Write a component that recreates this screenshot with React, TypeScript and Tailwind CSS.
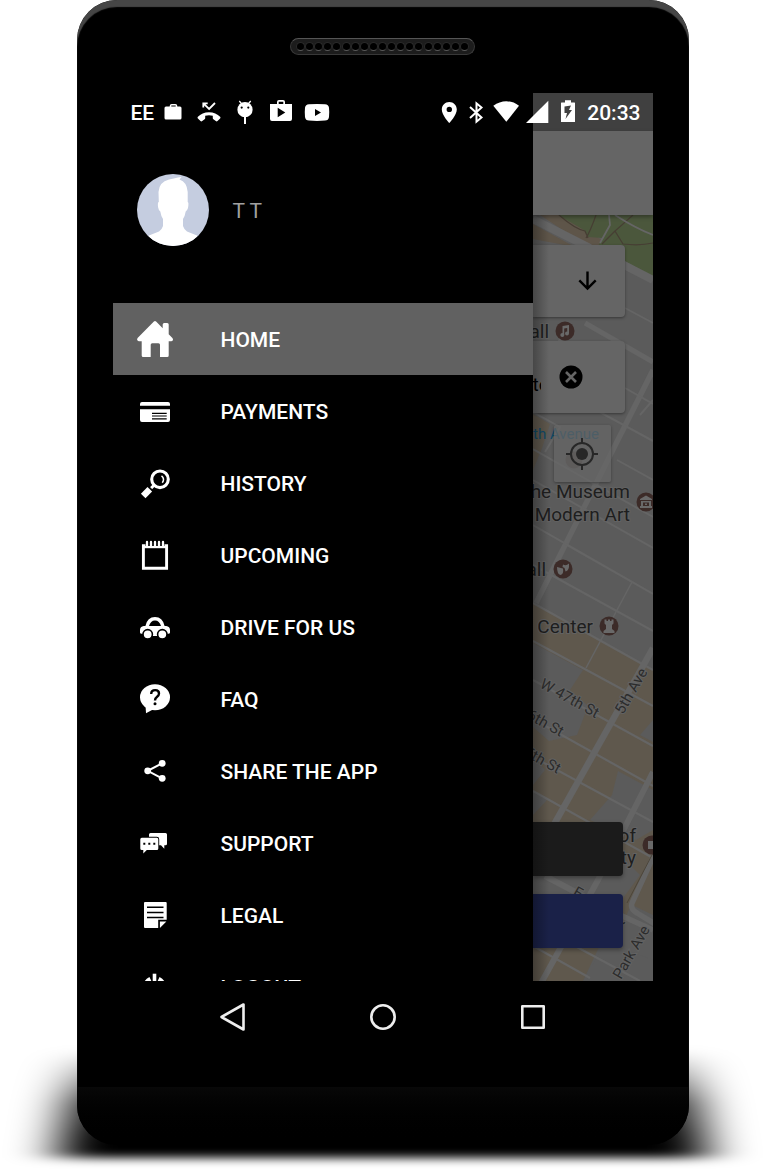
import React from "react";

type MenuItem = { label: string; icon: React.ReactNode; active?: boolean };

const HomeIcon = () => (
  <path
    fill="#fff"
    d="M16.9.6Q18-.4 19.1.6L25.700 7.200V3.500Q25.700 2 27.200 2h3q1.500 0 1.500 1.500v9.700l3.700 3.700Q37 19.600 34.400 20.300h-2.700v14.200q0 1.500-1.500 1.500H23V23.800q0-1.500-1.500-1.500h-6.300q-1.500 0-1.500 1.500V36H6.200q-1.500 0-1.500-1.500V20.300H1.800Q-.9 19.600.6 16.900Z"
  />
);
const CardIcon = () => (
  <g>
    <path fill="#fff" d="M5 9h26q2 0 2 2v1.800H3V11q0-2 2-2ZM3 16.300h30V27q0 2-2 2H5q-2 0-2-2Z" />
    <path stroke="#000" strokeWidth="1.200" d="M15 20.300h14.700M15 23h14.700M15 25.800h14.700" />
  </g>
);
const SearchIcon = () => (
  <g fill="none" stroke="#fff">
    <circle cx="23" cy="14.300" r="8.300" strokeWidth="3.100" />
    <path strokeWidth="1.500" d="M24.500 10.800q3.600 3 .8 7" />
    <path strokeWidth="3" d="m17 20.300-3 3" />
    <path strokeWidth="6.400" d="M12.800 24.200 6.200 31" />
    <path stroke="#000" strokeWidth=".8" d="m11.600 21.200 4.600 4.600" />
  </g>
);
const PadIcon = () => (
  <g>
    <path fill="none" stroke="#fff" strokeWidth="2.900" d="M6.400 8.800h23.200v22.400H6.400Z" />
    <path fill="#000" d="M8.500 5h19v4h-19Z" />
    <path stroke="#fff" strokeWidth="1.200" d="M7 10.600h22" />
    <path stroke="#fff" strokeWidth="2.300" strokeLinecap="round" d="M10 5v3.900M14 5v3.900M18 5v3.900M22 5v3.900M26 5v3.900" />
  </g>
);
const CarIcon = () => (
  <g>
    <path
      fill="#fff"
      fillRule="evenodd"
      d="M8.400 17Q10.400 8 18 8t9.600 9h1.600Q33 17.600 33 21v2.500q0 1.200-1.800 1.200H29V27H7v-2.300H4.800Q3 24.700 3 23.500V21q0-3.400 3.800-4ZM12 17h12q-1.500-5.600-6-5.600T12 17Z"
    />
    <circle cx="10.700" cy="25.300" r="4.700" fill="#fff" stroke="#000" strokeWidth="1.600" />
    <circle cx="25.300" cy="25.300" r="4.700" fill="#fff" stroke="#000" strokeWidth="1.600" />
    <path fill="#000" d="M3 25h2.600v3H3ZM30.400 25H33v3h-2.600ZM16 27h4v2h-4Z" />
  </g>
);
const FaqIcon = () => (
  <g>
    <ellipse cx="18" cy="16.300" rx="15" ry="13" fill="#fff" />
    <path fill="#fff" d="M8.500 24 9 32.200l7-3.700Z" />
    <path fill="none" stroke="#000" strokeWidth="2.400" d="M14.200 13q0-3.900 4-3.900 3.800 0 3.800 3.400 0 1.800-1.900 3.200Q18 17.200 18 19.600" />
    <circle cx="18" cy="22.800" r="1.500" fill="#000" />
  </g>
);
const ShareIcon = () => (
  <g fill="#fff">
    <path fill="none" stroke="#fff" strokeWidth="2" d="M25 10.300 10.700 17.800 25 25.300" />
    <circle cx="10.700" cy="17.800" r="3.400" />
    <circle cx="25.200" cy="10.300" r="3.400" />
    <circle cx="25.200" cy="25.300" r="3.400" />
  </g>
);
const ChatIcon = () => (
  <g>
    <path fill="#fff" d="M13.500 8h15q1.500 0 1.500 1.500v9.300q0 1.500-1.500 1.500h-1.200v3.400l-3.300-3.400H12V9.500Q12 8 13.500 8Z" />
    <path fill="#fff" stroke="#000" strokeWidth="1.800" paintOrder="stroke" d="M4.800 12.700h15q1.500 0 1.500 1.500v9.300q0 1.500-1.500 1.500H9.800l-3.500 3.600V25H4.800q-1.500 0-1.500-1.500v-9.300q0-1.500 1.500-1.500Z" />
    <path stroke="#000" strokeWidth="2" d="M6.300 18.700h2M11.300 18.700h2M16.300 18.700h2" />
  </g>
);
const PageIcon = () => (
  <g>
    <path fill="#fff" d="M8 5h20.700q1 0 1 1v16.800h-8.500V31H8q-1 0-1-1V6q0-1 1-1ZM22.900 24.500h6.500l-6.500 6.500Z" />
    <path stroke="#000" strokeWidth="1.500" d="M10 10.300h16.500M10 15.500h16.500M10 20.600h16.500" />
  </g>
);
const PowerIcon = () => (
  <g fill="none" stroke="#fff">
    <path strokeWidth="3.600" d="M17.500 4.700V19" />
    <path strokeWidth="4.400" d="M13.400 10a9.400 9.400 0 1 0 8.200 0" />
  </g>
);

const menu: MenuItem[] = [
  { label: "HOME", icon: <HomeIcon />, active: true },
  { label: "PAYMENTS", icon: <CardIcon /> },
  { label: "HISTORY", icon: <SearchIcon /> },
  { label: "UPCOMING", icon: <PadIcon /> },
  { label: "DRIVE FOR US", icon: <CarIcon /> },
  { label: "FAQ", icon: <FaqIcon /> },
  { label: "SHARE THE APP", icon: <ShareIcon /> },
  { label: "SUPPORT", icon: <ChatIcon /> },
  { label: "LEGAL", icon: <PageIcon /> },
  { label: "LOGOUT", icon: <PowerIcon /> },
];

function StatusIcon({ slot, children }: { slot: string; children: React.ReactNode }) {
  return (
    <span className={`flex shrink-0 justify-center ${slot}`}>
      <svg viewBox="0 0 24 24" className="size-6 overflow-visible" fill="#fff" aria-hidden="true">
        {children}
      </svg>
    </span>
  );
}

function StatusBar() {
  return (
    <header className="absolute inset-x-0 top-0 z-20 flex h-[38px] items-center justify-between pr-3 pl-[18px] text-[21px] leading-6 font-medium text-white">
      <div className="flex items-center">
        <span className="w-6 pt-0.5">EE</span>
        <StatusIcon slot="w-9">
          <path fillRule="evenodd" d="M5 6.500h3.700V6q0-2 2-2h3.600q2 0 2 2v.5H19q1.500 0 1.500 1.500v10q0 1.500-1.500 1.500H5Q3.500 19.500 3.500 18V8Q3.500 6.500 5 6.500Zm5.300 0h4.400V5.600h-4.400Z" />
        </StatusIcon>
        <StatusIcon slot="w-9">
          <path d="M12 12.200c-4.500 0-8.500 1.800-11.100 4.600-.5.500-.5 1.200 0 1.700l2.600 2.500c.5.500 1.200.5 1.700 0l2.400-1.700c.4-.3.600-.6.600-1v-2.500c2.500-.7 5.100-.7 7.600 0v2.500c0 .4.200.8.600 1l2.400 1.700c.5.500 1.200.5 1.700 0l2.600-2.500c.5-.5.5-1.200 0-1.700-2.600-2.800-6.600-4.600-11.100-4.600Z" />
          <path fill="none" stroke="#fff" strokeWidth="1.800" d="M6.300 7.500V3.300h4.400M6.600 3.600l5.500 5.400L18 3" />
        </StatusIcon>
        <StatusIcon slot="w-9">
          <path stroke="#fff" strokeWidth="1.300" d="m6.300 1 2.500 3M17.700 1l-2.500 3" />
          <circle cx="12" cy="9.700" r="7.600" />
          <path d="M11 17h2v7h-2Z" />
          <circle cx="8.700" cy="7.600" r="1.100" fill="#000" />
          <circle cx="15.300" cy="7.600" r="1.100" fill="#000" />
        </StatusIcon>
        <StatusIcon slot="w-9">
          <path fillRule="evenodd" d="M1 4h7V2q0-2 2-2h4q2 0 2 2v2h7v15q0 2-2 2H3q-2 0-2-2Zm8.700 0h4.600V1.700H9.700Zm-1 3.700v9.600l7.600-4.700Z" />
        </StatusIcon>
        <StatusIcon slot="w-9">
          <path fillRule="evenodd" d="M4 4.200q8-.6 16 0 3.500 0 4 3.600.5 4.600 0 9.200-.5 3.600-4 3.600-8 .6-16 0-3.500 0-4-3.600-.5-4.600 0-9.200.5-3.600 4-3.600ZM10 9v7l6-3.500Z" />
        </StatusIcon>
      </div>
      <div className="flex items-center">
        <StatusIcon slot="w-6">
          <path fillRule="evenodd" d="M12.300 2c-4.200 0-7.500 3.300-7.500 7.400 0 5.600 7.500 13.600 7.500 13.600s7.500-8 7.500-13.600c0-4.100-3.300-7.400-7.500-7.400Zm0 4.700a2.700 2.700 0 1 1 0 5.400 2.700 2.700 0 0 1 0-5.400Z" />
        </StatusIcon>
        <StatusIcon slot="w-[30px]">
          <path fill="none" stroke="#fff" strokeWidth="2" d="m6 7 11.500 10.500-5 4.200V3.300l5 4.200L6 18" />
        </StatusIcon>
        <StatusIcon slot="w-[30px]">
          <path d="M-.7 5.800Q5.500 1.300 12.300 1.300T25 5.800L12.300 21.800Z" />
        </StatusIcon>
        <StatusIcon slot="w-8">
          <path d="M23.300.7V23H1Z" />
        </StatusIcon>
        <StatusIcon slot="w-[30px]">
          <path fillRule="evenodd" d="M9 .3h6v2.200h3.500q.5 0 .5.500v18.500q0 .5-.5.500h-13q-.5 0-.5-.5V3q0-.500.500-.5H9ZM15 5.500l-6.500 1v6.500h2.500l-1.500 6 6.500-9h-3Z" />
        </StatusIcon>
        <time className="pt-0.5 pl-1">20:33</time>
      </div>
    </header>
  );
}

function MapCanvas() {
  return (
    <svg
      viewBox="533 215 120 766"
      preserveAspectRatio="xMinYMin slice"
      className="absolute inset-0 size-full font-[Roboto,sans-serif]"
      role="img"
      aria-label="Map"
    >
      <rect x="533" y="215" width="120" height="766" fill="#5b5b5b" />
      <g fill="#5e5549">
        <path d="M540 215H562L602 240 596 252Z" />
        <path d="M533 224 575 247 533 239Z" />
      </g>
      <g fill="#5f584d">
        <path d="M533 414 550 424 542 448 533 470Z" />
        <path d="M533 603 653 670V862L640 882 600 981H533V785L545 770 533 757Z" />
      </g>
      <path fill="#4b573c" d="M558 215H653V277L598 246 603 238 588 237 584 230Z" />
      <g fill="#5b5b5b">
        <path d="M533 643 583 670 570 690 588 706 577 735 549 741 533 727Z" />
        <path d="M653 720 640 735 653 742ZM618 771 653 790V830L636 840 590 820 612 795Z" />
        <path d="M533 790 547 800 533 815ZM533 862 625 860 640 875 618 905 605 940 620 981H583L600 945 620 905H533Z" />
        <path d="M606 942 653 960V981H583Z" />
      </g>
      <path fill="#5f584d" d="M653 850V915L632 905Z" />
      <g fill="none" stroke="#463e33" strokeWidth="1.200">
        <path d="M559 215Q575 229 585 231L588 238M596 215Q590 232 586 238M633 215 615 231 623 244Q640 246 653 243M615 231 602 244" />
      </g>
      <g fill="none" stroke="#656565">
        <path strokeWidth="8" d="M533 219 590 248" />
        <path strokeWidth="8" d="M620 263 653 280" />
        <path strokeWidth="1.800" d="M609 215 610 225 600 243M615 215Q635 228 653 235M625 308 653 323" />
        <path strokeWidth="5" d="M585 323 653 362" />
        <path strokeWidth="5.500" d="M653 370 536 603" />
        <path strokeWidth="4" d="M570 323 555 350" />
        <path strokeWidth="2" d="M625 388 653 404M585 404 653 441M617 460 653 480M533 449 653 517M533 480 653 548M533 525 653 594M533 412 560 427 545 452M565 544 653 594M533 565 653 631M653 400 640 415" />
        <path strokeWidth="2.200" d="M533 603 653 670M533 641 653 706M533 680 653 746M533 719 653 786M533 757 653 822M533 791 653 858M533 946 590 978M575 946 640 981" />
        <path strokeWidth="1.500" d="M632 582 586 668" />
        <path strokeWidth="6.500" d="M653 648 533 862" />
        <path strokeWidth="6" d="M653 772 598 880 540 985M545 876 600 905" />
        <path strokeWidth="5.500" d="M660 842 632 903Q630 909 637 913L655 924M620 915 653 930" />
      </g>
      <path fill="none" stroke="#4d463a" strokeWidth="1" d="M653 853 627 903" />
      <g fill="#1e1e1e" stroke="#626262" strokeWidth="2" paintOrder="stroke" fontSize="19">
        <text x="549" y="338" textAnchor="end">all</text>
        <text x="630" y="498" textAnchor="end">he Museum</text>
        <text x="630" y="521" textAnchor="end">Modern Art</text>
        <text x="546" y="576" textAnchor="end">all</text>
        <text x="593" y="633" textAnchor="end">Center</text>
        <text x="636" y="842" textAnchor="end">of</text>
        <text x="636" y="864" textAnchor="end">ty</text>
      </g>
      <text x="533" y="439" fill="#104a68" fontSize="15">th Avenue</text>
      <g fill="#2c2c2c" stroke="#626262" strokeWidth="2" paintOrder="stroke" fontSize="15">
        <text transform="translate(539 687) rotate(29)">W 47th St</text>
        <text transform="translate(526 718) rotate(29)">6th St</text>
        <text transform="translate(523 755) rotate(29)">5th St</text>
        <text transform="translate(623 715) rotate(-60)">5th Ave</text>
        <text transform="translate(621 980) rotate(-60)">Park Ave</text>
        <text transform="translate(572 895) rotate(29)">E</text>
        <text transform="translate(623 926) rotate(-60)">t</text>
      </g>
      <g fill="#3c2b28">
        <circle cx="565" cy="331" r="9.500" />
        <circle cx="574" cy="460" r="8.500" opacity=".5" />
        <circle cx="646" cy="502" r="9.500" />
        <circle cx="563" cy="569" r="9.500" />
        <circle cx="609" cy="626" r="9.500" />
        <circle cx="652" cy="845" r="9.500" />
      </g>
      <g fill="#696969">
        <path d="M562.500 326 569 325V333.500H567.200V328L564.200 328.500V335H562.500Z" />
        <circle cx="562.300" cy="335" r="2" />
        <circle cx="567" cy="333.500" r="2" />
        <path fillRule="evenodd" d="M646 495.500 652 499V500H640V499ZM641 501H651V506H652V508H640V506H641ZM643 502.500V506H649V502.500ZM645 503.500H647V505H645Z" />
        <path d="M557 567 563 568.500Q564 574 560.500 575 557 574 557 567ZM563 564.500Q566 566.500 569 563.500 569.500 571 565.500 571.500L564.500 568 562.500 567Z" />
        <path d="M604.500 619.500H606.500V621H608V619.500H610V621H611.500V619.500H613.500V623.500L612 625V629L614.500 631V633H603.500V631L606 629V625L604.500 623.500Z" />
        <path d="M648 841H653V849H648Z" />
      </g>
    </svg>
  );
}

function RidePane() {
  return (
    <main className="flex min-w-0 flex-1 flex-col">
      <div className="h-[38px] shrink-0 bg-[#404040]" />
      <div className="z-10 h-[84px] shrink-0 bg-[#656565] shadow-[0_2px_4px_rgba(0,0,0,0.35)]" />
      <div className="relative flex flex-1 flex-col overflow-hidden">
        <MapCanvas />
        <div className="relative flex flex-1 flex-col pt-[30px] pb-[33px]">
          <button type="button" aria-label="Expand" className="mr-7 flex h-[72px] shrink-0 items-center justify-end rounded-r-sm bg-[#656565] pr-[26px] shadow-[0_1px_3px_rgba(0,0,0,0.4)]">
            <svg viewBox="0 0 24 24" className="size-6" fill="none" stroke="#000" strokeWidth="2.400" aria-hidden="true">
              <path d="M12.500 2.500v17M4.300 11.300l8.200 8.200 8.200-8.200" />
            </svg>
          </button>
          <div className="mt-6 mr-7 flex h-[72px] shrink-0 items-center justify-between rounded-r-sm bg-[#656565] pr-[42px] shadow-[0_1px_3px_rgba(0,0,0,0.4)]">
            <span className="w-2 overflow-hidden pt-4 text-[19px] leading-6 whitespace-nowrap text-black">te</span>
            <button type="button" aria-label="Clear">
              <svg viewBox="0 0 24 24" className="size-6" aria-hidden="true">
                <circle cx="12" cy="12" r="11.500" fill="#000" />
                <path stroke="#656565" strokeWidth="2.600" d="m7 7 10 10M17 7 7 17" />
              </svg>
            </button>
          </div>
          <button type="button" aria-label="My location" className="mt-3 mr-[42px] flex size-[57px] shrink-0 items-center justify-center self-end rounded-xs bg-[#666666]/70 shadow-[0_1px_3px_rgba(0,0,0,0.35)]">
            <svg viewBox="0 0 32 32" className="size-8" fill="none" stroke="#272727" strokeWidth="2" aria-hidden="true">
              <circle cx="16" cy="16" r="11" />
              <circle cx="16" cy="16" r="6" fill="#272727" stroke="none" />
              <path d="M16 0v5M16 27v5M0 16h5M27 16h5" />
            </svg>
          </button>
          <div className="mt-auto mr-[30px] flex flex-col gap-[18px]">
            <button type="button" aria-label="Ride later" className="h-[54px] rounded-r-sm bg-[#1b1b1b] shadow-[0_2px_4px_rgba(0,0,0,0.35)]" />
            <button type="button" aria-label="Ride now" className="h-[54px] rounded-r-sm bg-[#1a2148] shadow-[0_2px_4px_rgba(0,0,0,0.35)]" />
          </div>
        </div>
        <div className="pointer-events-none absolute inset-y-0 left-0 w-4 bg-linear-to-r from-black/30 to-transparent" />
      </div>
    </main>
  );
}

function Drawer() {
  return (
    <aside className="w-7/9 shrink-0 bg-black">
      <div className="flex items-center gap-6 px-6 pt-[81px] pb-[57px]">
        <svg viewBox="0 0 72 72" className="size-[72px] rounded-full" role="img" aria-label="Profile picture">
          <rect width="72" height="72" fill="#c5cde0" />
          <path
            fill="#fff"
            d="M41 3.500 44.500 3 42.500 5.500Q50 8 50.700 18V28Q52 28 51 34 50 37 48.700 37.500 48 42 46 45V52Q47 55.500 50 57.500L60 61.500 66 72H6L12 61.500 22 57.500Q25 55.500 26 52V45Q24 42 23.300 37.500 21.500 36 21 33 20.500 28 21.800 28L21.500 18Q22 8 32 5.500Q37 4.500 41 3.500Z"
          />
        </svg>
        <span className="pt-0.5 text-[21px] leading-6 text-[#a0a0a0]">T T</span>
      </div>
      <nav>
        {menu.map((item) => (
          <a
            key={item.label}
            href="#"
            className={`flex h-[72px] items-center gap-12 px-6 text-[21px] leading-6 font-medium text-white ${item.active ? "bg-[#616161]" : ""}`}
          >
            <svg viewBox="0 0 36 36" className="size-9 shrink-0" aria-hidden="true">
              {item.icon}
            </svg>
            <span className="pt-0.5">{item.label}</span>
          </a>
        ))}
      </nav>
    </aside>
  );
}

function SystemNav() {
  return (
    <div className="flex h-[72px] shrink-0 items-center justify-center">
      <button type="button" aria-label="Back" className="flex w-[150px] justify-center">
        <svg viewBox="0 0 28 28" className="size-7" fill="none" stroke="#eee" strokeWidth="2.600" strokeLinejoin="round">
          <path d="M24.500 1.500V26.500L2.500 14Z" />
        </svg>
      </button>
      <button type="button" aria-label="Home" className="flex w-[150px] justify-center">
        <svg viewBox="0 0 28 28" className="size-7" fill="none" stroke="#eee" strokeWidth="2.600">
          <circle cx="14" cy="14" r="11.700" />
        </svg>
      </button>
      <button type="button" aria-label="Recent apps" className="flex w-[150px] justify-center">
        <svg viewBox="0 0 28 28" className="size-7" fill="none" stroke="#eee" strokeWidth="2.600" strokeLinejoin="round">
          <path d="M3.300 3.300H24.700V24.700H3.300Z" />
        </svg>
      </button>
    </div>
  );
}

export default function App() {
  return (
    <div className="relative flex h-screen justify-center overflow-hidden bg-white pb-[25px] font-[Roboto,sans-serif]">
      <svg viewBox="0 0 765 140" preserveAspectRatio="none" className="absolute inset-x-0 bottom-0 h-[140px] w-full" aria-hidden="true">
        <defs>
          <linearGradient id="fade" x1="0" y1="0" x2="0" y2="1">
            <stop offset="0" stopOpacity="0" />
            <stop offset=".5" stopOpacity=".85" />
            <stop offset=".8" stopOpacity="1" />
          </linearGradient>
          <filter id="ground" x="-20%" y="-40%" width="140%" height="180%">
            <feGaussianBlur stdDeviation="24 5" />
          </filter>
        </defs>
        <path d="M74 20H691L707 128H58Z" fill="url(#fade)" filter="url(#ground)" />
      </svg>
      <div className="relative flex w-4/5 flex-col overflow-hidden rounded-[40px] bg-black shadow-[inset_0_7px_1px_#464646]">
        <div className="flex h-[93px] shrink-0 items-center justify-center">
          <div className="flex h-[17px] w-[185px] items-center justify-between rounded-full border border-[#383838] border-t-[#555] bg-[#1c1c1c] px-[5px]">
            {Array.from({ length: 19 }, (_, i) => (
              <span key={i} className="size-[9px] rounded-full border border-[#2a2a2a] border-b-[#5a5a5a] bg-black" />
            ))}
          </div>
        </div>
        <div className="relative mx-9 flex min-h-0 flex-1 overflow-hidden">
          <Drawer />
          <RidePane />
          <StatusBar />
        </div>
        <SystemNav />
        <div className="mt-[34px] h-[58px] shrink-0 bg-linear-to-b from-[#080808] to-black" />
      </div>
    </div>
  );
}
